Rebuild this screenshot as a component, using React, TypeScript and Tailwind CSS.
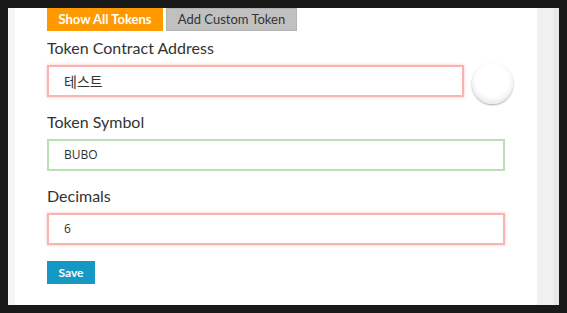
import React from "react";

export default function App() {
  return (
    <div className="w-[567px] h-[313px] bg-[#191919] pt-[8px] pl-[8px] pr-[8px] pb-[8px] overflow-hidden">
      <div className="flex h-[297px]">
        <div className="w-[7px] bg-[#f5f5f5]" />
        <div className="w-[522px] bg-white pl-[32px] font-['Lato',sans-serif]">
          <div className="flex h-[23px]">
            <div className="w-[116px] h-[23px] bg-[#ff9900] text-white font-bold text-[13px] flex items-center justify-center">
              Show All Tokens
            </div>
            <div className="ml-[3px] w-[131px] h-[23px] bg-[#c0c0c0] border border-[#b3b3b3] text-[#333] text-[13px] flex items-center justify-center">
              Add Custom Token
            </div>
          </div>
          <div className="mt-[5px] h-[24px] leading-[24px] text-[16px] text-[#333]">Token Contract Address</div>
          <div className="mt-[5px] h-[32px] flex items-start">
            <div className="w-[417px] h-[32px] border-2 border-[#f8b4ae] shadow-[0_0_3px_rgba(255,80,80,0.35)] flex items-center pl-[15px] text-[14px] text-[#333] font-['Noto_Sans_CJK_KR',sans-serif]">
              테스트
            </div>
            <div className="ml-[8px] -mt-[2px] w-[41px] h-[41px] shrink-0 rounded-full bg-[radial-gradient(circle_at_50%_42%,#ffffff_52%,#e8e8e8_78%,#b8b8b8_100%)] shadow-[0_1px_2px_rgba(0,0,0,0.35)]" />
          </div>
          <div className="mt-[13px] h-[24px] leading-[24px] text-[16px] text-[#333]">Token Symbol</div>
          <div className="mt-[5px] w-[458px] h-[32px] border-2 border-[#b9e0b2] flex items-center pl-[15px] text-[12px] text-[#333] font-['Open_Sans',sans-serif]">
            BUBO
          </div>
          <div className="mt-[13px] h-[24px] leading-[24px] text-[16px] text-[#333]">Decimals</div>
          <div className="mt-[5px] w-[458px] h-[32px] border-2 border-[#f8b4ae] shadow-[0_0_3px_rgba(255,80,80,0.35)] flex items-center pl-[15px] text-[12px] text-[#333] font-['Open_Sans',sans-serif]">
            6
          </div>
          <div className="mt-[16px] w-[48px] h-[23px] bg-[#1599c4] text-white font-bold text-[12px] flex items-center justify-center">
            Save
          </div>
        </div>
        <div className="w-[17px] bg-[#f0f0f0]" />
        <div className="w-[5px] bg-[#e8e8e8]" />
      </div>
    </div>
  );
}
